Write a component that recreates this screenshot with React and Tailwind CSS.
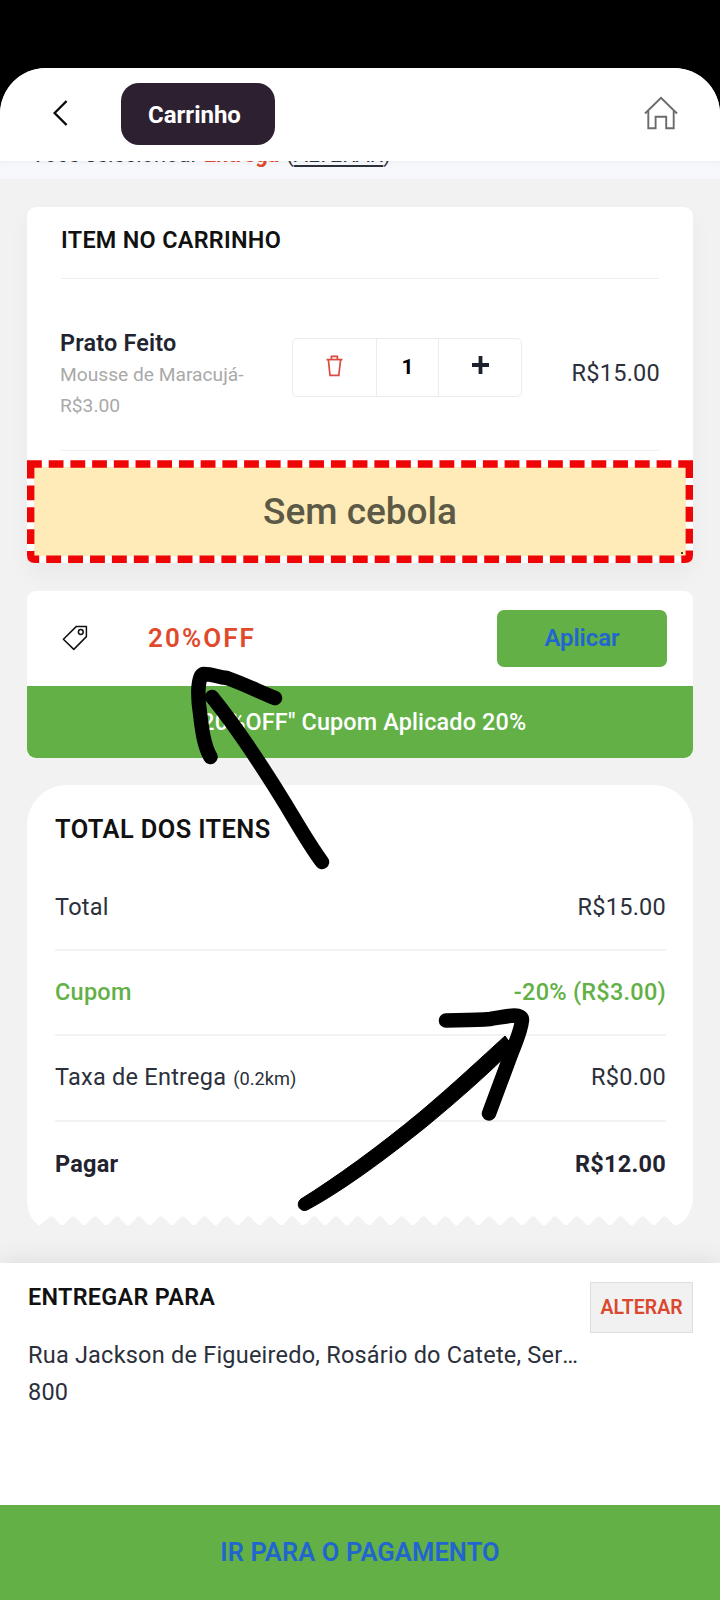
const TOTALS = [
  { label: 'Total',           value: 'R$15.00',        tone: 'text-[#2b303b]' },
  { label: 'Cupom',           value: '-20% (R$3.00)',  tone: 'text-[#62b046] font-medium' },
  { label: 'Taxa de Entrega', value: 'R$0.00',         tone: 'text-[#2b303b]', note: '(0.2km)' },
  { label: 'Pagar',           value: 'R$12.00',        tone: 'text-[#23232f] font-bold' },
]

// receipt edge: rounded shoulders, then 22px teeth
function tornEdge() {
  let d = 'M0 0 Q1 12 6 19 L11 24 L13 24'
  for (let i = 0; i < 29; i++) {
    const x = 24.3 + i * 21.9
    d += ` L${x - 1.5} 15.5 L${x + 1.5} 15.5 L${x + 9.5} 24 L${x + 12.5} 24`
  }
  return d + ' Q662 20 666 0 Z'
}

function BackIcon() {
  return (
    <svg width="16" height="28" viewBox="0 0 16 28" fill="none" stroke="#0a0a0a" strokeWidth="2.4">
      <path d="M13.6 2 L1.6 14 L13.6 26" />
    </svg>
  )
}

function HomeIcon() {
  return (
    <svg width="34" height="34" viewBox="0 0 34 34" fill="none" stroke="#6b6b6b" strokeWidth="1.9">
      <path d="M1 17.5 L17 1.8 L33 17.5" />
      <path d="M4.3 15 V32.2 H11.6 V20.8 H22.2 V32.2 H29.7 V15" />
    </svg>
  )
}

function TrashIcon() {
  return (
    <svg width="17" height="22" viewBox="0 0 17 22" fill="none" stroke="#dc4a40" strokeWidth="1.7">
      <path d="M0.5 4.6 H16.5" />
      <path d="M5.4 4.4 V1.4 H11.4 V4.4" />
      <path d="M2.4 4.8 L4 20.4 H12.8 L14.6 4.8" />
    </svg>
  )
}

function TagIcon() {
  return (
    <svg className="-mt-[2px]" width="26" height="26" viewBox="0 0 26 26" fill="none" stroke="#111" strokeWidth="1.5" strokeLinejoin="round">
      <path d="M1.4 14.2 L14.4 1.4 L24.4 1.6 L24.4 11.6 L11.8 24.4 Z" />
      <circle cx="18.8" cy="7" r="2.4" />
    </svg>
  )
}

function DashedFrame() {
  return (
    <svg className="absolute inset-0" width="666" height="103" viewBox="0 0 666 103" fill="none" stroke="#ee0505" strokeWidth="7.4">
      <path d="M0 4 H666" strokeDasharray="14.8 6.91" />
      <path d="M3.7 3.5 V95 Q3.7 99.3 8 99.3 H658 Q662.3 99.3 662.3 95 V3.5" strokeDasharray="14.9 7" />
    </svg>
  )
}

// hand drawn arrows lying over the page
function Arrows() {
  return (
    <svg className="pointer-events-none absolute top-0 left-0" width="720" height="1600" viewBox="0 0 720 1600" fill="none" stroke="#000" strokeWidth="14.5" strokeLinecap="round" strokeLinejoin="round">
      <path d="M212 697 C234 724 262 766 286 805 C298 825 310 846 322 862" />
      <path d="M210.5 757 C204 746 202 730 200 713 C197 694 198 674 204 674 C212 674 218 677 227 678 C244 684 260 692 275 698" />
      <path d="M446 1020.5 C470 1020 478 1020 490 1019 C504 1017 522 1012 522 1020 C521 1032 514 1046 510 1057 C503 1076 496 1095 489 1113.5" />
      <path strokeWidth="1" fill="#000" d="M301 1199 C335 1178 379 1146 420 1112 C452 1085 482 1057 505 1036 L514 1048 C486 1076 456 1102 427 1126 C386 1159 344 1190 308 1209.5 A6 6 0 0 1 301 1199 Z" />
    </svg>
  )
}

export default function App() {
  return (
    <div className="relative flex h-[1600px] w-[720px] flex-col overflow-hidden bg-black pt-[68px] font-['Roboto',sans-serif]">
      <div className="flex flex-1 flex-col overflow-hidden rounded-t-[46px] bg-[#f2f2f2]">
        <header className="flex h-[93px] shrink-0 items-start bg-white pr-[42px] pl-[53px]">
          <div className="mt-[31px] w-[68px]"><BackIcon /></div>
          <div className="mt-[15px] flex h-[62px] w-[154px] items-center rounded-[18px] bg-[#2d2030] pt-[2px] pl-[27px] text-[24px] font-bold text-white">
            Carrinho
          </div>
          <div className="mt-[28px] ml-auto"><HomeIcon /></div>
        </header>

        <div className="h-[18px] shrink-0 overflow-hidden bg-[#f6f8fb] pl-[31px] shadow-[inset_0_5px_4px_-3px_rgba(0,0,0,0.04)]">
          <p className="-mt-[20px] text-[21.8px] leading-[27px] whitespace-nowrap text-[#2b303b]">
            Você selecionou:
            <span className="ml-[8px] font-bold text-[#d9482f]">Entrega</span>
            <span className="ml-[7px]">(<span className="underline decoration-2 underline-offset-[3px]">ALTERAR</span>)</span>
          </p>
        </div>

        <main className="flex flex-1 flex-col px-[27px] pt-[28px]">
          <section className="h-[356px] rounded-[9px] bg-white shadow-[0_12px_24px_rgba(0,0,0,0.04)]">
            <div className="px-[34px]">
              <h2 className="h-[72px] border-b border-[#efefef] pt-[19px] text-[23.4px] leading-[28px] font-semibold tracking-[0.3px] text-[#111]">
                ITEM NO CARRINHO
              </h2>
              <div className="flex h-[172px] items-start border-b border-[#f0f0f0]">
                <div className="-ml-px w-[232px] pt-[48px]">
                  <p className="text-[23.4px] leading-[32px] font-semibold tracking-[0.2px] text-[#1f2430]">Prato Feito</p>
                  <p className="text-[19.2px] leading-[31px] text-[#a9a9a9]">Mousse de Maracujá-<br />R$3.00</p>
                </div>
                <div className="mt-[59px] flex h-[59px] w-[230px] shrink-0 divide-x divide-[#ececec] rounded-[5px] border border-[#ececec] text-black">
                  <button className="flex w-[84px] justify-center pt-[16px]"><TrashIcon /></button>
                  <span className="w-[62px] text-center text-[21px] leading-[57px] font-bold">1</span>
                  <button className="flex flex-1 justify-center pt-[17px]">
                    <svg width="17" height="18" viewBox="0 0 17 18" stroke="#1a222e" strokeWidth="3.8"><path d="M0 9 H17 M8.5 0 V18" /></svg>
                  </button>
                </div>
                <p className="mt-[79px] -mr-px ml-auto text-[23.5px] leading-[30px] tracking-[0.25px] text-[#2b303b]">R$15.00</p>
              </div>
            </div>
            <div className="relative mt-[9px] h-[103px] p-[7px]">
              <p className="h-full bg-[#feebb7] text-center text-[37px] leading-[89px] font-medium text-[#5c5946]">
                Sem cebola
              </p>
              <DashedFrame />
              <span className="absolute right-[10px] bottom-[9px] size-[2px] bg-[#3f4a20]" />
            </div>
          </section>

          <section className="mt-[28px] h-[167px] overflow-hidden rounded-[9px] bg-white">
            <div className="flex h-[95px] items-center pr-[26px] pl-[35px]">
              <TagIcon />
              <span className="ml-[60px] text-[26px] font-semibold tracking-[2.1px] text-[#df4a2c]">20%OFF</span>
              <button className="ml-auto h-[57px] w-[170px] rounded-[7px] bg-[#62b046] text-[23.8px] font-semibold text-[#2166d0]">Aplicar</button>
            </div>
            <p className="h-[72px] bg-[#62b046] text-center text-[23.4px] leading-[72px] font-medium tracking-[0.15px] text-white">
              "20%OFF" Cupom Aplicado 20%
            </p>
          </section>

          <section className="mt-[27px]">
            <div className="h-[416px] rounded-t-[40px] bg-white pr-[27px] pl-[28px]">
              <h2 className="h-[81px] pt-[28px] text-[25.4px] leading-[32px] font-semibold tracking-[0.4px] text-[#111]">TOTAL DOS ITENS</h2>
              <ul className="divide-y-2 divide-[#f2f2f2]">
                {TOTALS.map(({ label, value, tone, note }) => (
                  <li key={label} className={`flex h-[85.2px] items-center justify-between text-[23.5px] tracking-[0.25px] ${tone}`}>
                    <span>{label}{note && <small className="ml-[7px] text-[18.2px] tracking-normal">{note}</small>}</span>
                    <span>{value}</span>
                  </li>
                ))}
              </ul>
            </div>
            <svg className="block" width="666" height="26" viewBox="0 0 666 26" fill="#fff"><path d={tornEdge()} /></svg>
          </section>
        </main>

        <footer className="flex h-[337px] shrink-0 flex-col bg-white shadow-[0_-4px_24px_rgba(0,0,0,0.08)]">
          <div className="flex flex-1 items-start justify-between pr-[27px] pl-[28px]">
            <div className="w-[551px] text-[23.5px] tracking-[0.22px] text-[#2b303b]">
              <h2 className="mt-[17px] text-[23.4px] leading-[34px] font-semibold tracking-[0.3px] text-[#111]">ENTREGAR PARA</h2>
              <p className="mt-[23px] truncate leading-[37px]">Rua Jackson de Figueiredo, Rosário do Catete, Sergipe</p>
              <p className="leading-[37px]">800</p>
            </div>
            <button className="mt-[19px] h-[51px] w-[103px] shrink-0 border border-[#dedede] bg-[#f1f1f1] text-[19.5px] font-semibold text-[#d9482f]">ALTERAR</button>
          </div>
          <button className="h-[95px] bg-[#62b046] text-[25.5px] font-semibold tracking-[0.1px] text-[#2166d0]">IR PARA O PAGAMENTO</button>
        </footer>
      </div>
      <Arrows />
    </div>
  )
}
